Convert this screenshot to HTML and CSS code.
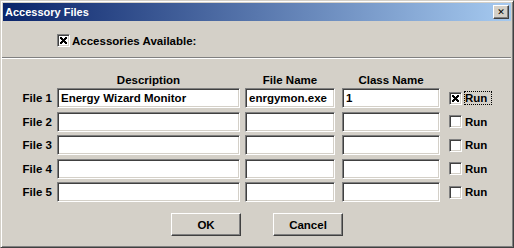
FILE: index.html
```html
<!DOCTYPE html>
<html lang="en">
  <head>
    <meta charset="UTF-8" />
    <title>Accessory Files</title>
    <link rel="stylesheet" href="styles.css">
  </head>

  <body>
    <div class="window">
      <div class="titlebar">
        <span class="title">Accessory Files</span>
        <button class="close">&#x2715;</button>
      </div>

      <div class="available">
        <span class="check checked"></span>
        <span>Accessories Available:</span>
      </div>

      <div class="separator"></div>

      <!-- file table -->
      <div class="files">
        <div></div>
        <div class="head">Description</div>
        <div class="head">File Name</div>
        <div class="head">Class Name</div>
        <div></div>

        <div class="label">File 1</div>
        <div class="field">Energy Wizard Monitor</div>
        <div class="field">enrgymon.exe</div>
        <div class="field">1</div>
        <div class="run"><span class="check checked"></span><span class="run-text focus">Run</span></div>

        <div class="label">File 2</div>
        <div class="field"></div>
        <div class="field"></div>
        <div class="field"></div>
        <div class="run"><span class="check"></span><span class="run-text">Run</span></div>

        <div class="label">File 3</div>
        <div class="field"></div>
        <div class="field"></div>
        <div class="field"></div>
        <div class="run"><span class="check"></span><span class="run-text">Run</span></div>

        <div class="label">File 4</div>
        <div class="field"></div>
        <div class="field"></div>
        <div class="field"></div>
        <div class="run"><span class="check"></span><span class="run-text">Run</span></div>

        <div class="label">File 5</div>
        <div class="field"></div>
        <div class="field"></div>
        <div class="field"></div>
        <div class="run"><span class="check"></span><span class="run-text">Run</span></div>
      </div>

      <div class="buttons">
        <button class="btn">OK</button>
        <button class="btn">Cancel</button>
      </div>
    </div>
  </body>
</html>
```

FILE: styles.css
```css
body {
  margin: 0;
  background-color: #d4d0c8;
  font-family: "Liberation Sans", Arial, sans-serif;
  font-weight: bold;
  font-size: 11.5px;
  color: black;
}

.window {
  box-sizing: border-box;
  width: 514px;
  height: 248px;
  padding: 1px;
  background-color: #d4d0c8;
  border: 1px solid;
  border-color: #d4d0c8 #404040 #404040 #d4d0c8;
  box-shadow: inset 1px 1px 0 #fff, inset -1px -1px 0 #808080;
  display: flex;
  flex-direction: column;
}

.titlebar {
  margin: 1px;
  height: 18px;
  background: linear-gradient(to right, #0a246a, #a6caf0);
  display: flex;
  align-items: center;
  justify-content: space-between;
  padding: 0 2px 0 2px;
}

.title {
  color: white;
  font-size: 11px;
}

.close {
  box-sizing: border-box;
  width: 16px;
  height: 14px;
  padding: 0;
  background-color: #d4d0c8;
  border: 1px solid;
  border-color: #fff #404040 #404040 #fff;
  box-shadow: inset -1px -1px 0 #808080;
  font-size: 9px;
  font-weight: bold;
  line-height: 11px;
  color: black;
  font-family: "DejaVu Sans", sans-serif;
}

.check {
  box-sizing: border-box;
  width: 13px;
  height: 13px;
  background-color: white;
  border: 1px solid;
  border-color: #808080 #fff #fff #808080;
  box-shadow: inset 1px 1px 0 #404040, inset -1px -1px 0 #d4d0c8;
  display: inline-block;
  position: relative;
  flex: none;
}

.check.checked::after {
  content: "";
  position: absolute;
  left: 2px;
  top: 2px;
  width: 7px;
  height: 7px;
  background:
    linear-gradient(45deg, transparent 38%, black 38%, black 62%, transparent 62%),
    linear-gradient(-45deg, transparent 38%, black 38%, black 62%, transparent 62%);
}

.available {
  margin-top: 12px;
  margin-left: 55px;
  display: flex;
  align-items: center;
  gap: 2px;
  height: 13px;
}

.separator {
  margin: 10px 1px 0 0;
  border-top: 1px solid #808080;
  border-bottom: 1px solid #fff;
}

.files {
  margin-top: 11.5px;
  margin-left: 1px;
  display: grid;
  grid-template-columns: 49px 183px 90px 100px auto;
  grid-template-rows: 14px repeat(5, 20px);
  column-gap: 5px;
  row-gap: 3.5px;
}

.files .head {
  text-align: center;
  line-height: 14px;
  padding-top: 2px;
}

.files > div:nth-child(5n+4) {
  margin-left: 2px;
}

.files > div:nth-child(5n+5) {
  margin-left: 4px;
}

.label {
  text-align: right;
  line-height: 20px;
}

.field {
  box-sizing: border-box;
  background-color: white;
  border: 1px solid;
  border-color: #808080 #fff #fff #808080;
  box-shadow: inset 1px 1px 0 #404040, inset -1px -1px 0 #d4d0c8;
  padding: 0 3px;
  line-height: 18px;
  white-space: nowrap;
  overflow: hidden;
}

.run {
  display: flex;
  align-items: center;
  gap: 2px;
}

.run-text {
  width: 27px;
  white-space: nowrap;
  line-height: 14px;
  padding-left: 1px;
}

.run-text.focus {
  outline: 1px dotted black;
  outline-offset: -1px;
}

.buttons {
  margin-top: 11px;
  display: flex;
  justify-content: center;
  gap: 32px;
}

.btn {
  box-sizing: border-box;
  width: 70px;
  height: 23px;
  background-color: #d4d0c8;
  border: 1px solid;
  border-color: #fff #404040 #404040 #fff;
  box-shadow: inset -1px -1px 0 #808080;
  font-family: "Liberation Sans", Arial, sans-serif;
  font-weight: bold;
  font-size: 11.5px;
  color: black;
  padding: 0;
}
```
